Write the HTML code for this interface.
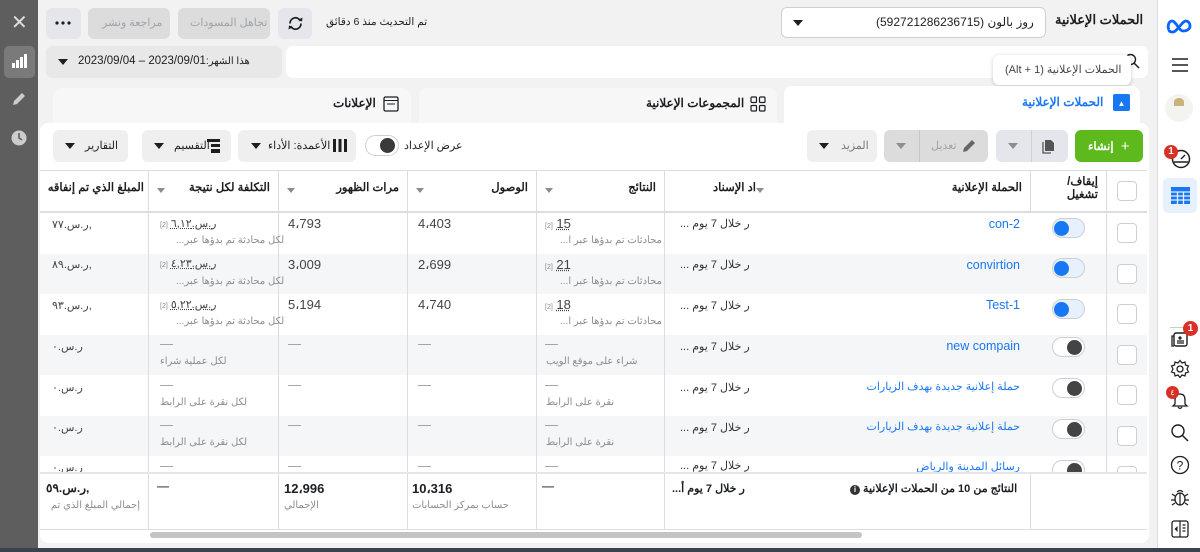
<!DOCTYPE html>
<html><head><meta charset="utf-8"><style>
*{box-sizing:border-box;margin:0;padding:0}
body{width:1200px;height:552px;overflow:hidden;background:#f2f2f2;font-family:"Liberation Sans","Noto Sans CJK SC",sans-serif;font-size:12px;color:#1c1e21;position:relative}
.a{position:absolute}
.btn{position:absolute;background:#e4e6eb;border-radius:6px}
.dis{color:#a0a3a8}
.tri{display:inline-block;width:0;height:0;border-left:5px solid transparent;border-right:5px solid transparent;border-top:6px solid #1c1e21}
.trig{border-top-color:#8a8d91}
.hd{position:absolute;top:170px;height:42px;font-weight:bold;font-size:11.5px;direction:rtl;padding:10px 8px 0}
.vl{position:absolute;width:1px;background:#dadde1}
.row{position:absolute;left:40px;width:1107px;height:40.5px}
.t{position:absolute;font-size:13px;color:#444}
.s{position:absolute;font-size:10px;color:#8a8d91;direction:rtl}
.nm{position:absolute;right:180px;color:#1877f2;font-size:12.5px;direction:rtl;white-space:nowrap}
.tg{position:absolute;left:1052px;width:33px;height:20px;border-radius:10px;border:1px solid #ccd0d5;background:#fff}
.tg i{position:absolute;top:2px;width:15px;height:15px;border-radius:50%;background:#444}
.on{background:#e7f0fd}
.on i{background:#1877f2;left:1px}
.off i{right:2px}
.cb{position:absolute;left:1117px;width:20px;height:20px;border:1px solid #ccd0d5;border-radius:4px;background:#fff}
</style></head><body>
<!-- left dark bar -->
<div class="a" style="left:0;top:0;width:38px;height:552px;background:#5e5e5e"></div>
<div class="a" style="left:11px;top:13px;color:#ddd;font-size:20px;line-height:20px">✕</div>
<div class="a" style="left:4px;top:46px;width:31px;height:32px;background:#7a7a7a;border-radius:5px"></div>
<svg class="a" style="left:12px;top:54px" width="15" height="14"><rect x="0" y="9" width="3" height="5" fill="#fff"/><rect x="4" y="6" width="3" height="8" fill="#fff"/><rect x="8" y="3" width="3" height="11" fill="#fff"/><rect x="12" y="0" width="3" height="14" fill="#fff"/></svg>
<svg class="a" style="left:12px;top:92px" width="14" height="14"><path d="M1 13 L2 9 L10 1 L13 4 L5 12 Z" fill="#ccc"/></svg>
<svg class="a" style="left:11px;top:130px" width="16" height="16"><circle cx="8" cy="8" r="7.5" fill="#ccc"/><path d="M8 3 V8 L11 10" stroke="#5e5e5e" stroke-width="1.6" fill="none"/></svg>
<div class="a" style="left:0;top:548px;width:1200px;height:4px;background:#3a4150"></div>

<!-- right sidebar -->
<div class="a" style="left:1157px;top:0;width:43px;height:548px;background:#fff;border-left:1px solid #dadde1"></div>
<svg class="a" style="left:1166px;top:19px" width="27" height="15" viewBox="0 0 27 15"><path d="M3 11 C1 7 3 2 6 2 C10 2 13 12 17 12 C21 12 24 10 24 7 C24 4 22 2 20 2 C16 2 11 13 7 13 C4 13 3 12 3 11" stroke="#0866ff" stroke-width="2.8" fill="none"/></svg>
<svg class="a" style="left:1172px;top:58px" width="16" height="14"><path d="M0 1H16M0 7H16M0 13H16" stroke="#1c1e21" stroke-width="1.6"/></svg>
<div class="a" style="left:1165px;top:94px;width:28px;height:28px;border-radius:50%;background:#f3f3ef"></div>
<div class="a" style="left:1174px;top:98px;width:10px;height:8px;background:#c9b37a;border-radius:50% 50% 0 0"></div>
<svg class="a" style="left:1170px;top:148px" width="22" height="22"><circle cx="11" cy="11" r="8.5" stroke="#1c1e21" stroke-width="1.5" fill="none"/><path d="M11 11 L15 7 M4 14 H18" stroke="#1c1e21" stroke-width="1.4"/></svg>
<div class="a" style="left:1164px;top:145px;width:14px;height:14px;border-radius:50%;background:#d93025;color:#fff;font-size:10px;font-weight:bold;text-align:center;line-height:14px">1</div>
<div class="a" style="left:1163px;top:178px;width:34px;height:35px;background:#e7f0fd;border-radius:5px"></div>
<svg class="a" style="left:1171px;top:187px" width="19" height="17"><path d="M0 0H19V17H0Z" fill="#1877f2"/><path d="M0 5H19M0 9H19M0 13H19M6.5 5V17M12.5 5V17" stroke="#e7f0fd" stroke-width="1.3"/></svg>
<div class="a" style="left:1170px;top:327px;width:19px;height:1px;background:#ccc"></div>
<svg class="a" style="left:1170px;top:329px" width="20" height="20"><rect x="4" y="4" width="13" height="13" rx="2" stroke="#1c1e21" stroke-width="1.4" fill="#fff"/><path d="M4 7 H2 V17 H4 M7 12H14M7 14H14" stroke="#1c1e21" stroke-width="1.3" fill="none"/><circle cx="10" cy="9" r="1.6" fill="#1c1e21"/></svg>
<div class="a" style="left:1183px;top:321px;width:15px;height:15px;border-radius:50%;background:#d93025;color:#fff;font-size:10px;font-weight:bold;text-align:center;line-height:15px">1</div>
<svg class="a" style="left:1170px;top:359px" width="20" height="20" viewBox="0 0 20 20"><circle cx="10" cy="10" r="3" stroke="#1c1e21" stroke-width="1.3" fill="none"/><path d="M10 1.5 L12 4 L15 3 L15.5 6 L18.5 7 L17 10 L18.5 13 L15.5 14 L15 17 L12 16 L10 18.5 L8 16 L5 17 L4.5 14 L1.5 13 L3 10 L1.5 7 L4.5 6 L5 3 L8 4 Z" stroke="#1c1e21" stroke-width="1.2" fill="none"/></svg>
<svg class="a" style="left:1170px;top:391px" width="20" height="20"><path d="M10 3 C6 3 5 6 5 9 V13 L3 15 H17 L15 13 V9 C15 6 14 3 10 3Z M8 16 Q10 19 12 16" stroke="#1c1e21" stroke-width="1.3" fill="none"/></svg>
<div class="a" style="left:1166px;top:386px;width:13px;height:13px;border-radius:50%;background:#d93025;color:#fff;font-size:8px;text-align:center;line-height:13px">٤</div>
<svg class="a" style="left:1170px;top:423px" width="20" height="20"><circle cx="8" cy="8" r="6" stroke="#1c1e21" stroke-width="1.4" fill="none"/><path d="M12.5 12.5 L18 18" stroke="#1c1e21" stroke-width="1.5"/></svg>
<svg class="a" style="left:1170px;top:455px" width="20" height="20"><circle cx="10" cy="10" r="8.5" stroke="#1c1e21" stroke-width="1.3" fill="none"/><text x="10" y="14.5" font-size="12" text-anchor="middle" fill="#1c1e21" font-family="Liberation Sans">?</text></svg>
<svg class="a" style="left:1170px;top:487px" width="20" height="20"><ellipse cx="10" cy="12" rx="5" ry="6" stroke="#1c1e21" stroke-width="1.3" fill="none"/><path d="M7 5 Q10 2 13 5 M10 6V18 M5 9 L2 7 M15 9 L18 7 M5 13 H1 M15 13 H19 M5 16 L2 18 M15 16 L18 18" stroke="#1c1e21" stroke-width="1.2" fill="none"/></svg>
<svg class="a" style="left:1170px;top:519px" width="20" height="20"><rect x="2" y="2" width="16" height="16" rx="2" stroke="#1c1e21" stroke-width="1.3" fill="none"/><path d="M10 2V18 M12.5 6H15.5 M12.5 9H15.5 M12.5 12H15.5" stroke="#1c1e21" stroke-width="1.2"/><path d="M7.5 7 L4.5 10 L7.5 13Z" fill="#1c1e21"/></svg>

<!-- top row -->
<div class="a" style="left:1055px;top:12px;font-weight:bold;font-size:13px;direction:rtl">الحملات الإعلانية</div>
<div class="a" style="left:781px;top:7px;width:265px;height:31px;background:#fff;border:1px solid #ccd0d5;border-radius:6px"></div>
<div class="a" style="left:876px;top:15px;font-size:12px;direction:rtl">روز بالون (592721286236715)</div>
<span class="a tri" style="left:793px;top:20px"></span>
<div class="a" style="left:326px;top:16px;font-size:10.5px;direction:rtl">تم التحديث منذ 6 دقائق</div>
<div class="btn" style="left:278px;top:8px;width:34px;height:31px"></div>
<svg class="a" style="left:287px;top:15px" width="17" height="17"><path d="M14 8.5 A5.5 5.5 0 0 1 3.5 11 M3 8.5 A5.5 5.5 0 0 1 13.5 6" stroke="#1c1e21" stroke-width="1.7" fill="none"/><path d="M11 5 L15 6.5 L15.5 2.5Z M6 12 L2 10.5 L1.5 14.5Z" fill="#1c1e21"/></svg>
<div class="btn" style="left:178px;top:8px;width:92px;height:31px;background:#dcdcdc"></div>
<div class="a dis" style="left:190px;top:16px;font-size:11px;direction:rtl">تجاهل المسودات</div>
<div class="btn" style="left:88px;top:8px;width:82px;height:31px;background:#dcdcdc"></div>
<div class="a dis" style="left:102px;top:16px;font-size:11px;direction:rtl">مراجعة ونشر</div>
<div class="btn" style="left:46px;top:8px;width:35px;height:31px"></div>
<svg class="a" style="left:55px;top:21px" width="16" height="4"><circle cx="2" cy="2" r="1.6" fill="#1c1e21"/><circle cx="8" cy="2" r="1.6" fill="#1c1e21"/><circle cx="14" cy="2" r="1.6" fill="#1c1e21"/></svg>

<!-- row 2 -->
<div class="btn" style="left:46px;top:46px;width:236px;height:32px;background:#e8e8e8"></div>
<span class="a tri" style="left:58px;top:59px"></span>
<div class="a" style="left:78px;top:55px;font-size:11.5px;white-space:nowrap;direction:ltr;unicode-bidi:bidi-override">2023/09/04 – 2023/09/01</div>
<div class="a" style="left:206px;top:56px;font-size:10px;white-space:nowrap;direction:rtl">هذا الشهر:</div>
<div class="a" style="left:286px;top:46px;width:862px;height:32px;background:#fff;border-radius:7px"></div>
<svg class="a" style="left:1124px;top:53px" width="16" height="16"><circle cx="6.5" cy="6.5" r="5" stroke="#1c1e21" stroke-width="1.4" fill="none"/><path d="M10 10 L15 15" stroke="#1c1e21" stroke-width="1.5"/></svg>
<div class="a" style="left:993px;top:55px;width:138px;height:30px;background:#fff;border-radius:6px;box-shadow:0 1px 4px rgba(0,0,0,.2)"></div>
<div class="a" style="left:1005px;top:63px;font-size:11px;color:#444;direction:rtl">الحملات الإعلانية (1 + Alt)</div>

<!-- tabs -->
<div class="a" style="left:53px;top:88px;width:358px;height:40px;background:#f7f7f7;border-radius:8px 8px 0 0"></div>
<svg class="a" style="left:383px;top:96px" width="16" height="16"><rect x="1" y="1" width="14" height="14" rx="1.5" stroke="#1c1e21" stroke-width="1.3" fill="none"/><path d="M1 4.5H15M4 8H12" stroke="#1c1e21" stroke-width="1"/></svg>
<div class="a" style="left:333px;top:96px;font-weight:bold;font-size:12px;direction:rtl">الإعلانات</div>
<div class="a" style="left:419px;top:88px;width:358px;height:40px;background:#f7f7f7;border-radius:8px 8px 0 0"></div>
<svg class="a" style="left:750px;top:96px" width="16" height="16"><g stroke="#1c1e21" stroke-width="1.2" fill="none"><rect x="1" y="1" width="5.5" height="5.5" rx="1"/><rect x="9.5" y="1" width="5.5" height="5.5" rx="1"/><rect x="1" y="9.5" width="5.5" height="5.5" rx="1"/><rect x="9.5" y="9.5" width="5.5" height="5.5" rx="1"/></g></svg>
<div class="a" style="left:646px;top:96px;font-weight:bold;font-size:12px;direction:rtl">المجموعات الإعلانية</div>
<div class="a" style="left:784px;top:86px;width:356px;height:44px;background:#fff;border-radius:8px 8px 0 0"></div>
<div class="a" style="left:1113px;top:94px;width:17px;height:17px;background:#1877f2;border-radius:2px;color:#fff;font-size:8px;text-align:center;line-height:19px">▲</div>
<div class="a" style="left:1022px;top:95px;font-weight:bold;font-size:12px;color:#1877f2;direction:rtl">الحملات الإعلانية</div>

<!-- main card -->
<div class="a" style="left:40px;top:123px;width:1109px;height:420px;background:#fff;border-radius:8px"></div>
<!-- toolbar -->
<div class="btn" style="left:1075px;top:130px;width:68px;height:32px;background:#5db91c"></div>
<div class="a" style="left:1088px;top:137px;color:#fff;font-weight:bold;font-size:11.5px;white-space:nowrap">إنشاء <span style="font-size:15px;font-weight:normal;margin-left:4px;position:relative;top:1px">+</span></div>
<div class="btn" style="left:996px;top:130px;width:72px;height:32px"></div>
<div class="a" style="left:1031px;top:130px;width:1px;height:32px;background:#ccd0d5"></div>
<svg class="a" style="left:1041px;top:139px" width="14" height="15"><path d="M4 1H10L13 4V12H4Z" fill="#555"/><path d="M2 3V14H10" stroke="#555" stroke-width="1.3" fill="none"/></svg>
<span class="a tri trig" style="left:1008px;top:143px"></span>
<div class="btn" style="left:884px;top:130px;width:104px;height:32px;background:#dcdcdc"></div>
<div class="a" style="left:919px;top:130px;width:1px;height:32px;background:#c8c8c8"></div>
<svg class="a" style="left:962px;top:138px" width="15" height="15"><path d="M1 14 L2 10 L10 2 L13 5 L5 13 Z" fill="#666"/></svg>
<div class="a dis" style="left:931px;top:139px;font-size:11px;direction:rtl">تعديل</div>
<span class="a tri trig" style="left:896px;top:143px"></span>
<div class="btn" style="left:807px;top:130px;width:70px;height:32px;background:#efefef"></div>
<div class="a" style="left:841px;top:139px;font-size:11px;color:#777;direction:rtl">المزيد</div>
<span class="a tri" style="left:819px;top:143px"></span>
<div class="a" style="left:404px;top:139px;font-size:11px;direction:rtl">عرض الإعداد</div>
<div class="a" style="left:365px;top:135px;width:34px;height:21px;border-radius:11px;border:1px solid #ccd0d5;background:#fff"></div>
<div class="a" style="left:380px;top:138px;width:15px;height:15px;border-radius:50%;background:#3a3a3a"></div>
<div class="btn" style="left:238px;top:130px;width:118px;height:32px;background:#efefef"></div>
<svg class="a" style="left:333px;top:139px" width="14" height="13"><path d="M0 0H3V13H0ZM5.5 0H8.5V13H5.5ZM11 0H14V13H11Z" fill="#1c1e21"/></svg>
<div class="a" style="left:268px;top:139px;font-size:11px;direction:rtl">الأعمدة: الأداء</div>
<span class="a tri" style="left:251px;top:143px"></span>
<div class="btn" style="left:142px;top:130px;width:89px;height:32px;background:#efefef"></div>
<svg class="a" style="left:207px;top:139px" width="13" height="14"><path d="M0 0H13V3H0ZM4 5H13V8H4ZM4 10H13V14H4Z" fill="#1c1e21"/></svg>
<div class="a" style="left:174px;top:139px;font-size:11px;direction:rtl">التقسيم</div>
<span class="a tri" style="left:154px;top:143px"></span>
<div class="btn" style="left:53px;top:130px;width:75px;height:32px;background:#efefef"></div>
<div class="a" style="left:85px;top:139px;font-size:11px;direction:rtl">التقارير</div>
<span class="a tri" style="left:65px;top:143px"></span>

<!-- header -->
<div class="a" style="left:40px;top:170px;width:1107px;height:1px;background:#dadde1"></div>
<div class="a" style="left:40px;top:211px;width:1107px;height:2px;background:#dadde1"></div>
<div class="hd" style="left:40px;width:108px;white-space:nowrap;padding-right:4px;overflow:hidden;text-align:right">المبلغ الذي تم إنفاقه</div>
<div class="hd" style="left:148px;width:130px;text-align:right">التكلفة لكل نتيجة</div>
<div class="hd" style="left:278px;width:129px;text-align:right">مرات الظهور</div>
<div class="hd" style="left:407px;width:129px;text-align:right">الوصول</div>
<div class="hd" style="left:536px;width:128px;text-align:right">النتائج</div>
<div class="hd" style="left:664px;width:100px;text-align:right;white-space:nowrap;overflow:hidden">اد الإسناد</div>
<div class="hd" style="left:830px;width:200px;text-align:right">الحملة الإعلانية</div>
<div class="hd" style="left:1030px;width:76px;text-align:right;padding-top:6px;line-height:13px">إيقاف/<br>تشغيل</div>
<span class="a tri trig" style="left:157px;top:188px;border-width:5px 4px 0"></span>
<span class="a tri trig" style="left:287px;top:188px;border-width:5px 4px 0"></span>
<span class="a tri trig" style="left:416px;top:188px;border-width:5px 4px 0"></span>
<span class="a tri trig" style="left:545px;top:188px;border-width:5px 4px 0"></span>
<span class="a tri trig" style="left:756px;top:188px;border-width:5px 4px 0"></span>
<div class="cb" style="top:181px"></div>

<!-- rows -->
<div class="row" style="top:213px;background:#fff"></div>
<div class="row" style="top:253.5px;background:#f5f6f7"></div>
<div class="row" style="top:294px;background:#fff"></div>
<div class="row" style="top:334.5px;background:#f5f6f7"></div>
<div class="row" style="top:375px;background:#fff"></div>
<div class="row" style="top:415.5px;background:#f5f6f7"></div>
<div class="row" style="top:456px;background:#fff;height:17px"></div>

<!-- vertical lines -->
<div class="vl" style="left:148px;top:170px;height:359px"></div>
<div class="vl" style="left:278px;top:170px;height:359px"></div>
<div class="vl" style="left:407px;top:170px;height:359px"></div>
<div class="vl" style="left:536px;top:170px;height:359px"></div>
<div class="vl" style="left:664px;top:170px;height:359px"></div>
<div class="vl" style="left:1030px;top:170px;height:42px"></div>
<div class="vl" style="left:1030px;top:473px;height:56px"></div>
<div class="vl" style="left:1106px;top:170px;height:303px"></div>

<!-- row1 -->
<div class="t" style="left:52px;top:218px;font-size:11px">ر.س.٧٧,</div>
<div class="t" style="left:160px;top:217px;font-size:11px"><span style="font-size:7px;color:#888">[2]</span> <u style="text-decoration-style:dotted">ر.س.٦,١٢</u></div>
<div class="s" style="left:176px;top:235px">لكل محادثة تم بدؤها عبر...</div>
<div class="t" style="left:288px;top:216px">4،793</div>
<div class="t" style="left:418px;top:216px">4،403</div>
<div class="t" style="left:545px;top:216px"><span style="font-size:7px;color:#888">[2]</span> <u style="text-decoration-style:dotted">15</u></div>
<div class="s" style="left:560px;top:235px">محادثات تم بدؤها عبر ا...</div>
<div class="t" style="left:680px;top:217px;font-size:11px;color:#333;direction:rtl">ر خلال 7 يوم ...</div>
<div class="nm" style="top:217px">con-2</div>
<div class="tg on" style="top:218px"><i></i></div>
<div class="cb" style="top:223px"></div>
<!-- row2 -->
<div class="t" style="left:52px;top:258px;font-size:11px">ر.س.٨٩,</div>
<div class="t" style="left:160px;top:257px;font-size:11px"><span style="font-size:7px;color:#888">[2]</span> <u style="text-decoration-style:dotted">ر.س.٤,٢٣</u></div>
<div class="s" style="left:176px;top:276px">لكل محادثة تم بدؤها عبر...</div>
<div class="t" style="left:288px;top:257px">3،009</div>
<div class="t" style="left:418px;top:257px">2،699</div>
<div class="t" style="left:545px;top:257px"><span style="font-size:7px;color:#888">[2]</span> <u style="text-decoration-style:dotted">21</u></div>
<div class="s" style="left:560px;top:276px">محادثات تم بدؤها عبر ا...</div>
<div class="t" style="left:680px;top:258px;font-size:11px;color:#333;direction:rtl">ر خلال 7 يوم ...</div>
<div class="nm" style="top:258px">convirtion</div>
<div class="tg on" style="top:258px"><i></i></div>
<div class="cb" style="top:264px"></div>
<!-- row3 -->
<div class="t" style="left:52px;top:299px;font-size:11px">ر.س.٩٣,</div>
<div class="t" style="left:160px;top:298px;font-size:11px"><span style="font-size:7px;color:#888">[2]</span> <u style="text-decoration-style:dotted">ر.س.٥,٢٢</u></div>
<div class="s" style="left:176px;top:316px">لكل محادثة تم بدؤها عبر...</div>
<div class="t" style="left:288px;top:297px">5،194</div>
<div class="t" style="left:418px;top:297px">4،740</div>
<div class="t" style="left:545px;top:297px"><span style="font-size:7px;color:#888">[2]</span> <u style="text-decoration-style:dotted">18</u></div>
<div class="s" style="left:560px;top:316px">محادثات تم بدؤها عبر ا...</div>
<div class="t" style="left:680px;top:299px;font-size:11px;color:#333;direction:rtl">ر خلال 7 يوم ...</div>
<div class="nm" style="top:298px">Test-1</div>
<div class="tg on" style="top:299px"><i></i></div>
<div class="cb" style="top:304px"></div>
<!-- rows 4-7 -->
<div class="t" style="left:52px;top:340px;font-size:11px">ر.س.٠</div>
<div class="t" style="left:160px;top:336px;color:#999">—</div><div class="s" style="left:160px;top:356px">لكل عملية شراء</div>
<div class="t" style="left:288px;top:336px;color:#999">—</div><div class="t" style="left:418px;top:336px;color:#999">—</div>
<div class="t" style="left:545px;top:336px;color:#999">—</div><div class="s" style="left:546px;top:356px">شراء على موقع الويب</div>
<div class="t" style="left:680px;top:340px;font-size:11px;color:#333;direction:rtl">ر خلال 7 يوم ...</div>
<div class="nm" style="top:339px">new compain</div>
<div class="tg off" style="top:337px"><i></i></div>
<div class="cb" style="top:345px"></div>

<div class="t" style="left:52px;top:381px;font-size:11px">ر.س.٠</div>
<div class="t" style="left:160px;top:377px;color:#999">—</div><div class="s" style="left:160px;top:397px">لكل نقرة على الرابط</div>
<div class="t" style="left:288px;top:377px;color:#999">—</div><div class="t" style="left:418px;top:377px;color:#999">—</div>
<div class="t" style="left:545px;top:377px;color:#999">—</div><div class="s" style="left:546px;top:397px">نقرة على الرابط</div>
<div class="t" style="left:680px;top:381px;font-size:11px;color:#333;direction:rtl">ر خلال 7 يوم ...</div>
<div class="nm" style="top:380px;font-size:11px">حملة إعلانية جديدة بهدف الزيارات</div>
<div class="tg off" style="top:378px"><i></i></div>
<div class="cb" style="top:385px"></div>

<div class="t" style="left:52px;top:421px;font-size:11px">ر.س.٠</div>
<div class="t" style="left:160px;top:417px;color:#999">—</div><div class="s" style="left:160px;top:437px">لكل نقرة على الرابط</div>
<div class="t" style="left:288px;top:417px;color:#999">—</div><div class="t" style="left:418px;top:417px;color:#999">—</div>
<div class="t" style="left:545px;top:417px;color:#999">—</div><div class="s" style="left:546px;top:437px">نقرة على الرابط</div>
<div class="t" style="left:680px;top:421px;font-size:11px;color:#333;direction:rtl">ر خلال 7 يوم ...</div>
<div class="nm" style="top:420px;font-size:11px">حملة إعلانية جديدة بهدف الزيارات</div>
<div class="tg off" style="top:419px"><i></i></div>
<div class="cb" style="top:426px"></div>

<div style="position:absolute;left:40px;top:456px;width:1107px;height:17px;overflow:hidden">
<div class="t" style="left:12px;top:5px;font-size:11px">ر.س.٠</div>
<div class="t" style="left:120px;top:2px;color:#999">—</div>
<div class="t" style="left:248px;top:2px;color:#999">—</div><div class="t" style="left:378px;top:2px;color:#999">—</div><div class="t" style="left:505px;top:2px;color:#999">—</div>
<div class="t" style="left:640px;top:3px;font-size:11px;color:#333;direction:rtl">ر خلال 7 يوم ...</div>
<div class="nm" style="top:4px;right:127px;font-size:11px">رسائل المدينة والرياض</div>
<div class="tg off" style="top:4px;left:1012px"><i></i></div>
<div class="cb" style="top:10px;left:1077px"></div>
</div>

<!-- footer -->
<div class="a" style="left:40px;top:472px;width:1107px;height:2px;background:#e4e6eb"></div>
<div class="a" style="left:40px;top:529px;width:1107px;height:1px;background:#dadde1"></div>
<div class="a" style="left:46px;top:481px;font-weight:bold;font-size:12px">ر.س.٥٩,</div>
<div class="s" style="left:40px;top:500px;width:100px;white-space:nowrap;overflow:hidden;text-align:right">إجمالي المبلغ الذي تم</div>
<div class="a" style="left:157px;top:479px;font-weight:bold;color:#555">—</div>
<div class="a" style="left:284px;top:481px;font-weight:bold;font-size:13px">12،996</div>
<div class="s" style="left:284px;top:500px">الإجمالي</div>
<div class="a" style="left:412px;top:481px;font-weight:bold;font-size:13px">10،316</div>
<div class="s" style="left:412px;top:500px">حساب بمركز الحسابات</div>
<div class="a" style="left:542px;top:479px;font-weight:bold;color:#555">—</div>
<div class="a" style="left:672px;top:482px;font-weight:bold;font-size:11px;direction:rtl">ر خلال 7 يوم أ...</div>
<div class="a" style="left:850px;top:482px;font-weight:bold;font-size:11px;direction:rtl">النتائج من 10 من الحملات الإعلانية <span style="display:inline-block;width:10px;height:10px;border-radius:50%;background:#333;color:#fff;font-size:8px;text-align:center;line-height:10px">i</span></div>
<div class="a" style="left:150px;top:532px;width:712px;height:6px;background:#c4c4c4;border-radius:3px"></div>
</body></html>
